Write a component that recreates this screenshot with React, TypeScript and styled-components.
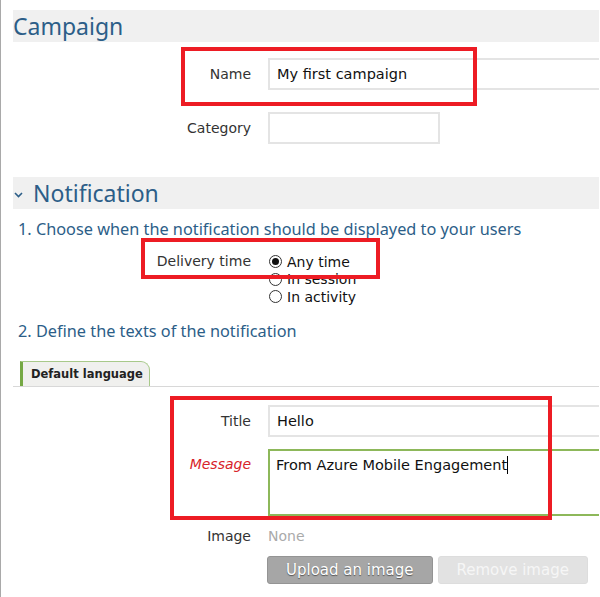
import React from "react";
import styled, { createGlobalStyle } from "styled-components";

const GlobalStyle = createGlobalStyle`
  html, body {
    margin: 0;
    padding: 0;
    background: #ffffff;
    overflow: hidden;
  }
  body {
    font-family: "DejaVu Sans", Verdana, sans-serif;
  }
`;

const Page = styled.div`
  position: relative;
  width: 600px;
  height: 597px;
  box-sizing: border-box;
  padding: 10px 0 0 12px;
  border-left: 2px solid #a9a9a9;
  margin-left: -1px;
  overflow: hidden;
`;

const SectionHeader = styled.div<{ $top: number }>`
  display: flex;
  align-items: center;
  gap: 10px;
  height: 32px;
  margin-top: ${(p) => p.$top}px;
  margin-right: -20px;
  background: #f0f0f0;
  color: #2c5e88;
  font-family: "Noto Sans", "Open Sans", sans-serif;
  font-size: 23px;
  line-height: 32px;
`;

const Chevron = styled.svg`
  width: 9px;
  height: 6px;
  margin-left: 1px;
  margin-top: 4px;
`;

const FormRow = styled.div<{ $top: number; $align?: string }>`
  display: grid;
  grid-template-columns: 238px 1fr;
  column-gap: 17px;
  align-items: ${(p) => p.$align || "center"};
  margin-top: ${(p) => p.$top}px;
`;

const Label = styled.div<{ $required?: boolean }>`
  text-align: right;
  font-size: 14px;
  line-height: 20px;
  color: ${(p) => (p.$required ? "#d8232a" : "#333333")};
  font-style: ${(p) => (p.$required ? "italic" : "normal")};
`;

const TextInput = styled.div<{ $width: number }>`
  box-sizing: border-box;
  width: ${(p) => p.$width}px;
  height: 32px;
  border: 2px solid #e4e4e4;
  padding: 0 7px;
  font-size: 14.5px;
  line-height: 28px;
  color: #111111;
`;

const TextArea = styled.div`
  box-sizing: border-box;
  width: 360px;
  height: 67px;
  border: 2px solid #8db85a;
  padding: 4px 6px;
  font-size: 14.5px;
  line-height: 20px;
  color: #111111;
`;

const Caret = styled.span`
  display: inline-block;
  width: 1px;
  height: 18px;
  background: #000;
  vertical-align: -4px;
`;

const Step = styled.div<{ $top: number }>`
  margin-top: ${(p) => p.$top}px;
  padding-left: 5px;
  color: #2c5e88;
  font-family: "Noto Sans", "Open Sans", sans-serif;
  font-size: 16.3px;
  line-height: 20px;
`;

const RadioGroup = styled.div`
  display: flex;
  flex-direction: column;
`;

const RadioOption = styled.div`
  display: flex;
  align-items: center;
  gap: 5px;
  height: 17.5px;
  font-size: 14px;
  color: #111111;
`;

const RadioDot = styled.span<{ $checked?: boolean }>`
  box-sizing: border-box;
  width: 13px;
  height: 13px;
  margin-left: 1px;
  border-radius: 50%;
  border: 1px solid #333;
  background: #fff;
  display: flex;
  align-items: center;
  justify-content: center;

  &::after {
    content: "";
    width: 7px;
    height: 7px;
    border-radius: 50%;
    background: ${(p) => (p.$checked ? "#111" : "transparent")};
  }
`;

const TabBar = styled.div`
  margin-top: 20px;
  margin-right: -20px;
  padding-left: 7px;
  border-bottom: 1px solid #d8d8d8;
  display: flex;
`;

const Tab = styled.div`
  height: 25px;
  box-sizing: border-box;
  padding: 0 6px 0 8px;
  border-left: 3px solid #75a844;
  border-top: 1px solid #a8c98a;
  border-right: 1px solid #a8c98a;
  border-top-right-radius: 9px;
  background: #f0f0ee;
  font-size: 11.5px;
  font-weight: bold;
  line-height: 24px;
  color: #222;
`;

const Muted = styled.div`
  font-size: 14px;
  line-height: 20px;
  color: #aaaaaa;
`;

const Buttons = styled.div`
  display: flex;
  gap: 5px;
  margin-left: -1px;
`;

const Button = styled.div<{ $disabled?: boolean }>`
  box-sizing: border-box;
  height: 28px;
  padding: 0 18px;
  border-radius: 3px;
  border: 1px solid ${(p) => (p.$disabled ? "#dddddd" : "#949494")};
  background: ${(p) => (p.$disabled ? "#e2e2e2" : "#a6a6a6")};
  color: ${(p) => (p.$disabled ? "#f6f6f6" : "#ffffff")};
  text-shadow: ${(p) => (p.$disabled ? "none" : "0 1px 1px #555")};
  font-size: 15px;
  line-height: 26px;
`;

const Highlight = styled.div<{ $x: number; $y: number; $w: number; $h: number }>`
  position: absolute;
  left: ${(p) => p.$x}px;
  top: ${(p) => p.$y}px;
  width: ${(p) => p.$w}px;
  height: ${(p) => p.$h}px;
  box-sizing: border-box;
  border: 4px solid #ed1c24;
  pointer-events: none;
`;

export default function App() {
  return (
    <Page>
      <GlobalStyle />
      <SectionHeader $top={0}>Campaign</SectionHeader>

      <FormRow $top={16}>
        <Label>Name</Label>
        <TextInput $width={360}>My first campaign</TextInput>
      </FormRow>
      <FormRow $top={22}>
        <Label>Category</Label>
        <TextInput $width={172} />
      </FormRow>

      <SectionHeader $top={33}>
        <Chevron viewBox="0 0 9 6">
          <path d="M1 1l3.5 3.5L8 1" fill="none" stroke="#2c5e88" strokeWidth="1.6" />
        </Chevron>
        Notification
      </SectionHeader>

      <Step $top={10}>1. Choose when the notification should be displayed to your users</Step>

      <FormRow $top={14} $align="start">
        <Label style={{ lineHeight: "17.5px" }}>Delivery time</Label>
        <RadioGroup>
          <RadioOption>
            <RadioDot $checked />
            Any time
          </RadioOption>
          <RadioOption>
            <RadioDot />
            In session
          </RadioOption>
          <RadioOption>
            <RadioDot />
            In activity
          </RadioOption>
        </RadioGroup>
      </FormRow>

      <Step $top={15}>2. Define the texts of the notification</Step>

      <TabBar>
        <Tab>Default language</Tab>
      </TabBar>

      <FormRow $top={18}>
        <Label>Title</Label>
        <TextInput $width={360}>Hello</TextInput>
      </FormRow>
      <FormRow $top={12} $align="start">
        <Label $required style={{ marginTop: 5 }}>
          Message
        </Label>
        <TextArea>
          From Azure Mobile Engagement
          <Caret />
        </TextArea>
      </FormRow>
      <FormRow $top={10}>
        <Label>Image</Label>
        <Muted>None</Muted>
      </FormRow>
      <FormRow $top={10}>
        <span />
        <Buttons>
          <Button>Upload an image</Button>
          <Button $disabled>Remove image</Button>
        </Buttons>
      </FormRow>

      <Highlight $x={180} $y={47} $w={296} $h={59} />
      <Highlight $x={140} $y={238} $w={239} $h={41} />
      <Highlight $x={169} $y={396} $w={382} $h={124} />
    </Page>
  );
}
